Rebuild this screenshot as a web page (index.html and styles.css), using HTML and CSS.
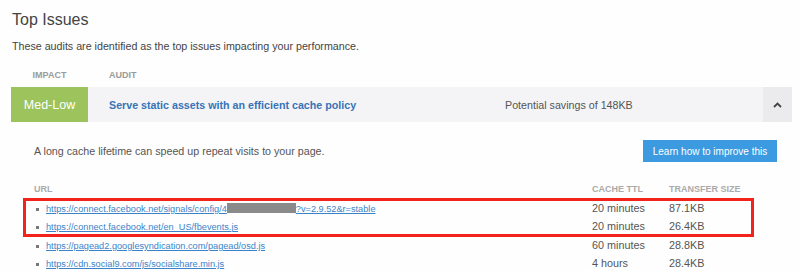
FILE: index.html
```html
<!DOCTYPE html>
<html lang="en">
  <head>
    <meta charset="UTF-8" />
    <meta name="viewport" content="width=device-width, initial-scale=1.0" />
    <title>Top Issues</title>
    <link rel="stylesheet" href="styles.css">
  </head>
  <body>
    <div class="container">
      <h2>Top Issues</h2>
      <p class="intro">These audits are identified as the top issues impacting your performance.</p>

      <div class="col-head">
        <span class="col-impact">IMPACT</span>
        <span class="col-audit">AUDIT</span>
      </div>

      <div class="audit-row">
        <div class="impact">Med-Low</div>
        <div class="audit-title">Serve static assets with an efficient cache policy</div>
        <div class="savings">Potential savings of 148KB</div>
        <div class="toggle">
          <svg width="9" height="6" viewBox="0 0 9 6"><path d="M1 5 L4.5 1.5 L8 5" fill="none" stroke="#444" stroke-width="1.8"/></svg>
        </div>
      </div>

      <div class="details">
        <div class="details-top">
          <p>A long cache lifetime can speed up repeat visits to your page.</p>
          <button class="learn">Learn how to improve this</button>
        </div>

        <div class="res-table">
          <div class="res-row res-head">
            <span class="c-url">URL</span>
            <span class="c-ttl">CACHE TTL</span>
            <span class="c-size">TRANSFER SIZE</span>
          </div>
          <div class="res-body">
            <div class="res-row">
              <span class="c-url"><a href="#">https://connect.facebook.net/signals/config/4<span class="redact"></span>?v=2.9.52&amp;r=stable</a></span>
              <span class="c-ttl">20 minutes</span>
              <span class="c-size">87.1KB</span>
            </div>
            <div class="res-row">
              <span class="c-url"><a href="#">https://connect.facebook.net/en_US/fbevents.js</a></span>
              <span class="c-ttl">20 minutes</span>
              <span class="c-size">26.4KB</span>
            </div>
            <div class="res-row">
              <span class="c-url"><a href="#">https://pagead2.googlesyndication.com/pagead/osd.js</a></span>
              <span class="c-ttl">60 minutes</span>
              <span class="c-size">28.8KB</span>
            </div>
            <div class="res-row">
              <span class="c-url"><a href="#">https://cdn.social9.com/js/socialshare.min.js</a></span>
              <span class="c-ttl">4 hours</span>
              <span class="c-size">28.4KB</span>
            </div>
          </div>
          <div class="highlight"></div>
        </div>
      </div>
    </div>
  </body>
</html>
```

FILE: styles.css
```css
body {
  font-family: "Liberation Sans", Arial, sans-serif;
  margin: 0;
  background: #fefefe;
  color: #444;
}

.container {
  width: 781px;
  padding: 9px 0 0 11px;
}

h2 {
  font-size: 16px;
  font-weight: normal;
  color: #444;
  margin: 0 0 0 1px;
  line-height: 22px;
}

.intro {
  font-size: 10.7px;
  line-height: 12px;
  color: #444;
  margin: 9px 0 0 1px;
}

.col-head {
  display: flex;
  font-size: 9px;
  font-weight: bold;
  color: #9a9a9a;
  line-height: 16px;
  margin-top: 15px;
  padding-bottom: 4px;
}

.col-impact {
  width: 77px;
  text-align: center;
}

.col-audit {
  padding-left: 21px;
}

.audit-row {
  display: flex;
  align-items: stretch;
  height: 35px;
  background-color: #f4f4f6;
}

.impact {
  width: 77px;
  background-color: #9dc35c;
  color: #fff;
  font-size: 12.5px;
  display: flex;
  align-items: center;
  justify-content: center;
}

.audit-title {
  flex: 1;
  padding-left: 21px;
  color: #3773b6;
  font-weight: bold;
  font-size: 10.7px;
  display: flex;
  align-items: center;
}

.savings {
  width: 258px;
  font-size: 10.7px;
  color: #555;
  display: flex;
  align-items: center;
}

.toggle {
  width: 29px;
  background-color: #ebebed;
  display: flex;
  align-items: center;
  justify-content: center;
}

.details {
  padding: 18px 15px 0 23px;
}

.details-top {
  display: flex;
  justify-content: space-between;
  align-items: center;
}

.details-top p {
  margin: 0;
  font-size: 10.7px;
  color: #555;
}

.learn {
  background-color: #3c9ae0;
  color: white;
  border: none;
  width: 134px;
  height: 22px;
  font-family: inherit;
  font-size: 10px;
  padding: 0;
}

.res-table {
  position: relative;
  margin-top: 19px;
}

.res-body {
  padding-top: 3px;
}

.res-row {
  display: flex;
  font-size: 10.8px;
  line-height: 17.4px;
  color: #555;
}

.res-head {
  font-size: 9px;
  font-weight: bold;
  color: #aaa;
  line-height: 16px;
}

.c-url {
  flex: 1;
  position: relative;
}

.res-body .c-url {
  padding-left: 12px;
}

.res-body .c-url::before {
  content: "";
  position: absolute;
  left: 2px;
  top: 8px;
  width: 3px;
  height: 3px;
  background-color: #777;
}

.c-url a {
  color: #3b83c9;
  font-size: 9.2px;
}

.redact {
  display: inline-block;
  width: 69px;
  height: 10px;
  background-color: #8a8a8a;
  vertical-align: -1px;
}

.c-ttl {
  width: 77px;
}

.c-size {
  width: 108px;
}

.highlight {
  position: absolute;
  left: -11px;
  top: 17px;
  width: 725px;
  height: 33px;
  border: 3px solid #f2231b;
}
```
